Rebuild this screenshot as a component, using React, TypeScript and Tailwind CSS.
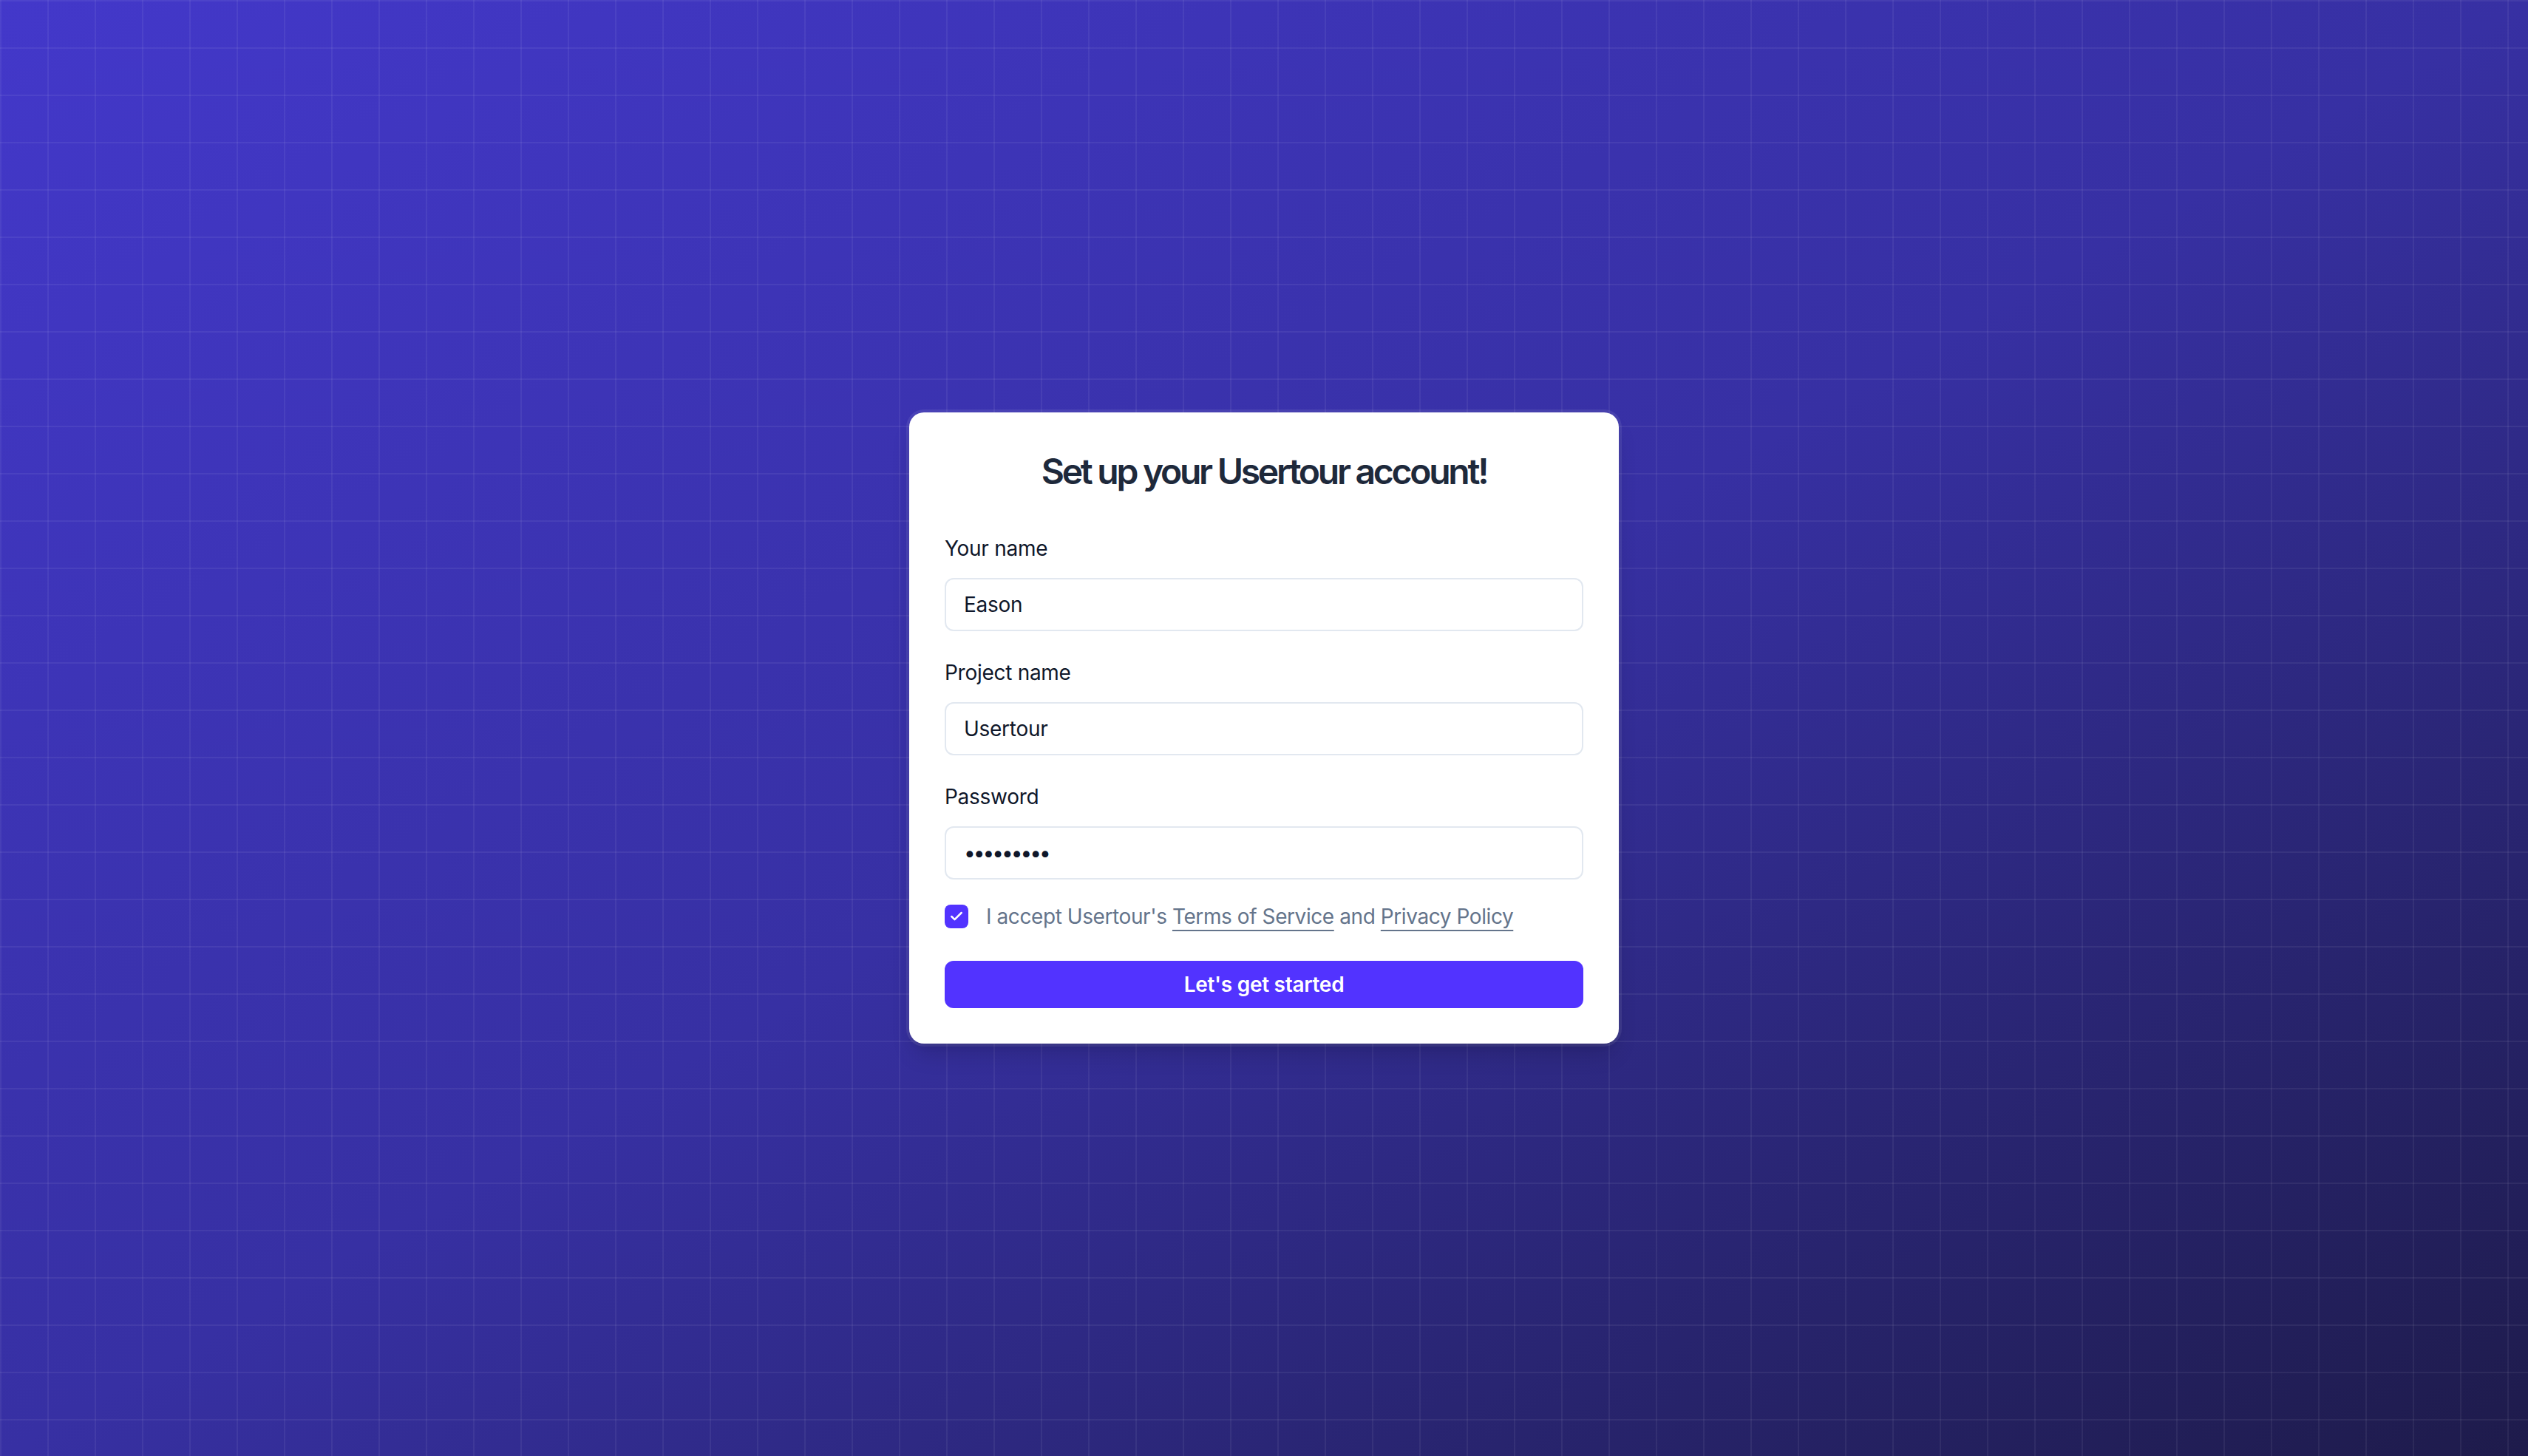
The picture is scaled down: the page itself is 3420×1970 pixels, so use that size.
import React from "react";

function Field({ label, type = "text", value }: { label: string; type?: string; value: string }) {
  const isPw = type === "password";
  return (
    <div className="flex flex-col">
      <label className="text-[28px] leading-[40px] font-normal tracking-[-0.01em] text-[#0f172a] mb-[20px]">{label}</label>
      <input
        type={type}
        defaultValue={value}
        readOnly
        className={
          isPw
            ? "h-[72px] w-full rounded-[12px] border-2 border-[#e2e8f0] bg-white px-[24px] text-[28px] tracking-[-3px] text-[#0f172a] outline-none font-['Inter',sans-serif]"
            : "h-[72px] w-full rounded-[12px] border-2 border-[#e2e8f0] bg-white px-[24px] text-[28px] tracking-[-0.01em] text-[#0f172a] outline-none font-['Inter',sans-serif]"
        }
      />
    </div>
  );
}

export default function App() {
  return (
    <div className="w-full h-[1970px] bg-linear-to-br from-[#4338ca] via-[#3730a3] to-[#1e1b4b] font-['Inter',sans-serif]">
      <div className="w-full h-full flex items-center justify-center bg-[linear-gradient(to_right,rgba(255,255,255,0.06)_2px,transparent_2px),linear-gradient(to_bottom,rgba(255,255,255,0.06)_2px,transparent_2px)] bg-[size:64px_64px]">
        <div className="w-[960px] bg-white rounded-[20px] px-[48px] pt-[48px] pb-[48px] flex flex-col shadow-[0_0_0_4px_rgba(255,255,255,0.08),0_20px_30px_-6px_rgba(0,0,0,0.15),0_8px_12px_-8px_rgba(0,0,0,0.15)]">
          <h1 className="text-center text-[48px] leading-[64px] font-semibold tracking-[-0.068em] text-[#1e293b]">
            Set up your Usertour account!
          </h1>
          <div className="mt-[52px] flex flex-col gap-[36px]">
            <Field label="Your name" value="Eason" />
            <Field label="Project name" value="Usertour" />
            <Field label="Password" type="password" value="123456789" />
          </div>
          <div className="mt-[30px] flex items-center gap-[24px] h-[40px]">
            <div className="w-[32px] h-[32px] rounded-[8px] bg-[#5233ff] flex items-center justify-center">
              <svg width="20" height="20" viewBox="0 0 24 24" fill="none" stroke="white" strokeWidth="3" strokeLinecap="round" strokeLinejoin="round">
                <path d="M20 6 9 17l-5-5" />
              </svg>
            </div>
            <p className="text-[28px] leading-[40px] tracking-[-0.015em] text-[#64748b]">
              I accept Usertour's{" "}
              <a className="underline underline-offset-[8px] decoration-2">Terms of Service</a> and{" "}
              <a className="underline underline-offset-[8px] decoration-2">Privacy Policy</a>
            </p>
          </div>
          <button className="mt-[40px] h-[64px] w-full rounded-[12px] bg-[#5233ff] text-white text-[28px] font-semibold tracking-[-0.01em]">
            Let's get started
          </button>
        </div>
      </div>
    </div>
  );
}
